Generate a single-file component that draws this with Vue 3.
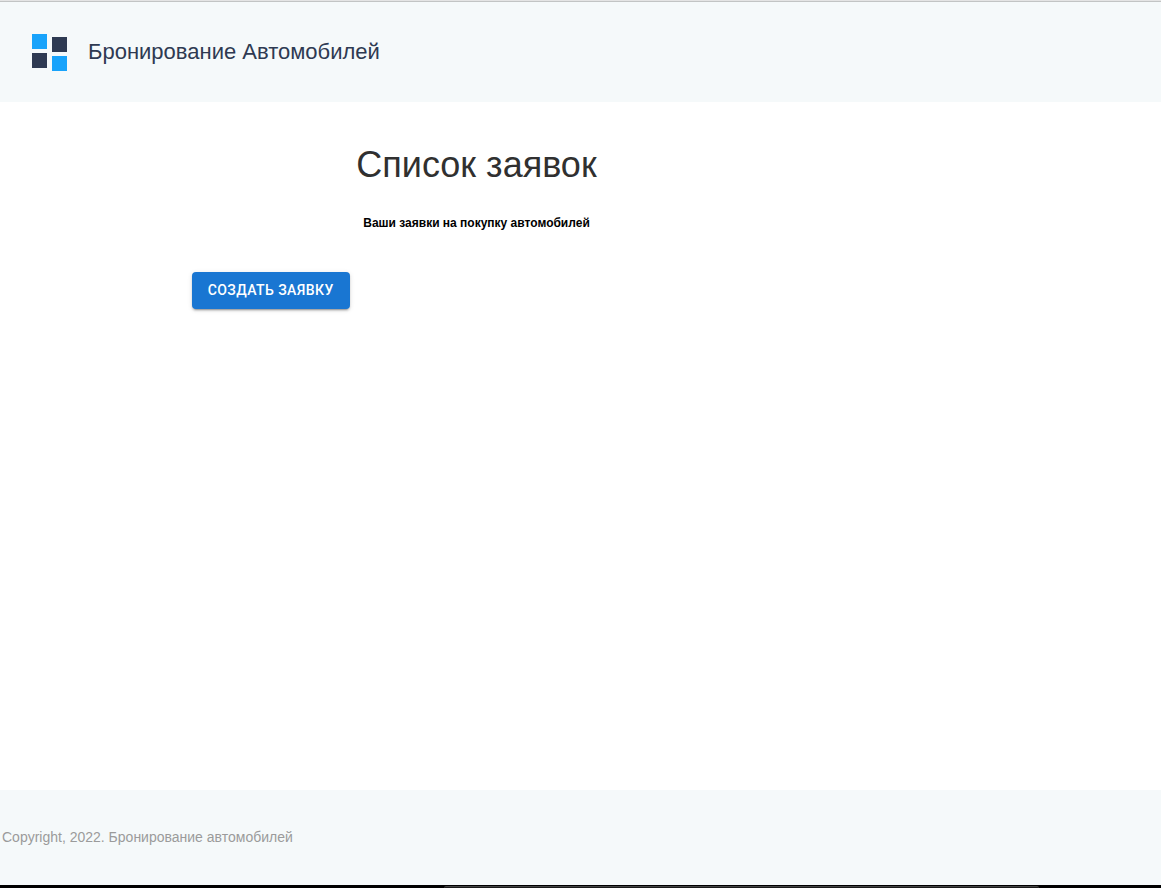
<script setup>
const title = 'Бронирование Автомобилей'
</script>

<template>
  <div class="page">
    <div class="top-edge"></div>
    <header class="header">
      <svg class="logo" width="36" height="38" viewBox="0 0 36 38" shape-rendering="crispEdges">
        <rect x="0" y="0" width="15" height="15" fill="#18a3fb" />
        <rect x="20" y="3" width="15" height="15" fill="#2e3a52" />
        <rect x="0" y="19" width="15" height="15" fill="#2e3a52" />
        <rect x="20" y="22" width="15" height="15" fill="#18a3fb" />
      </svg>
      <span class="brand">{{ title }}</span>
    </header>
    <main class="main">
      <section class="intro">
        <h1>Список заявок</h1>
        <p>Ваши заявки на покупку автомобилей</p>
      </section>
      <button class="create" type="button">Создать заявку</button>
    </main>
    <footer class="footer">Copyright, 2022. Бронирование автомобилей</footer>
    <div class="bottom-edge"><div class="handle"></div></div>
  </div>
</template>

<style>
body { margin: 0; }
</style>

<style scoped>
.page { display: flex; flex-direction: column; height: 888px; overflow: hidden; background: #fff; font-family: "Liberation Sans", Arial, sans-serif; }
.top-edge { height: 1px; flex: none; background: #e4e4e4; border-bottom: 1px solid #c2c4c4; box-sizing: content-box; }
.header { flex: none; height: 100px; box-sizing: border-box; display: flex; align-items: flex-start; padding: 32px 32px 0; background: #f5f9fa; }
.logo { display: block; flex: none; }
.brand { margin: 5px 0 0 20px; font-size: 22px; line-height: 25px; color: #2e3a52; white-space: nowrap; }
.main { flex: 1; padding-left: 192px; }
.intro { width: 569px; text-align: center; }
h1 { margin: 0; padding-top: 42px; font-size: 36px; line-height: 42px; font-weight: 400; color: #303030; }
p { margin: 30px 0 0; font-size: 12px; line-height: 14px; font-weight: 700; color: #000; }
.create { display: block; margin-top: 42px; width: 158px; height: 37px; padding: 0; border: 0; border-radius: 4px; background: #1976d2; color: #fff; font: 500 14px/24.5px Roboto, sans-serif; letter-spacing: 0.4px; text-indent: -0.6px; text-transform: uppercase; box-shadow: 0 3px 1px -2px rgba(0,0,0,.2), 0 2px 2px rgba(0,0,0,.14), 0 1px 5px rgba(0,0,0,.12); }
.footer { flex: none; height: 95px; box-sizing: border-box; padding: 39px 2px 0; background: #f5f9fa; color: #9b9b9b; font-size: 14px; line-height: 16px; }
.bottom-edge { flex: none; height: 3px; background: #000; display: flex; align-items: flex-end; }
.handle { margin-left: 444px; width: 595px; height: 1px; border-top: 1px solid #444; background: #1a1a1a; border-radius: 2px 2px 0 0; }
</style>
